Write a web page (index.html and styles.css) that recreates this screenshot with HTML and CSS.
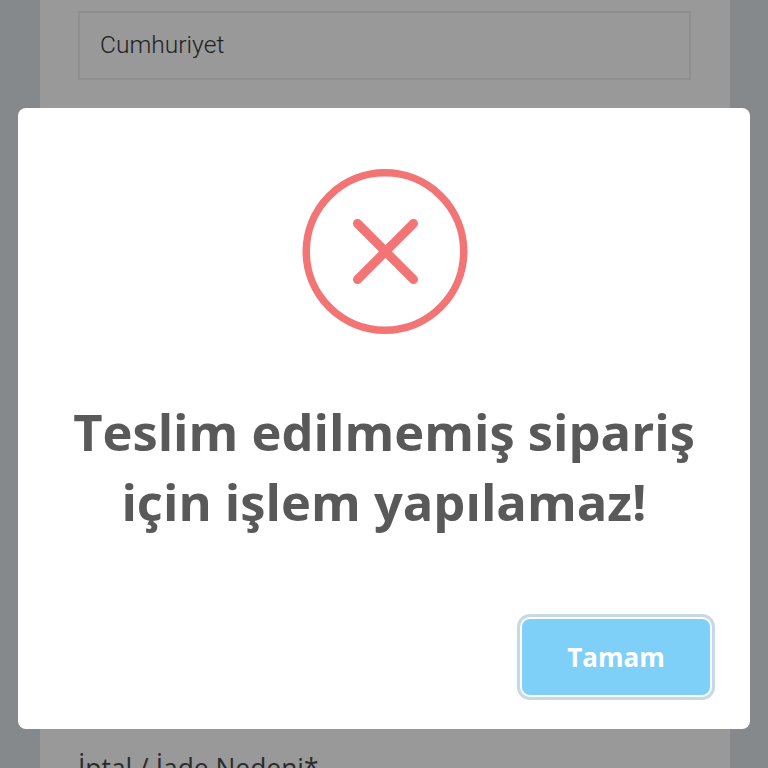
FILE: index.html
```html
<!DOCTYPE html>
<html lang="tr">
<head>
    <meta charset="UTF-8">
    <meta name="viewport" content="width=device-width, initial-scale=1.0">
    <title>Teslim edilmemiş sipariş</title>
    <link rel="stylesheet" href="styles.css">
</head>
<body>
    <div class="page">
        <div class="form-card">
            <div class="input-box">Cumhuriyet</div>
            <p class="field-label">İptal / İade Nedeni*</p>
        </div>
    </div>

    <div class="modal">
        <svg class="error-icon" width="167" height="167" viewBox="0 0 167 167">
            <circle cx="84" cy="83.5" r="78.75" fill="none" stroke="#f27474" stroke-width="7.5"/>
            <path d="M56.5 55.5L112.5 111.5M112.5 55.5L56.5 111.5" fill="none" stroke="#f27474" stroke-width="9" stroke-linecap="round"/>
        </svg>
        <h2 class="modal-title">Teslim edilmemiş sipariş<br>için işlem yapılamaz!</h2>
        <div class="modal-actions">
            <button class="ok-button">Tamam</button>
        </div>
    </div>
</body>
</html>
```

FILE: styles.css
```css
html, body {
    height: 100%;
}

body {
    margin: 0;
    height: 768px;
    overflow: hidden;
    background: #85898c;
    font-family: 'Roboto', sans-serif;
}

.page {
    height: 768px;
    padding: 0 38px 0 40px;
    overflow: hidden;
}

.form-card {
    height: 768px;
    background: #999999;
    padding: 11px 39px 0 38px;
}

.input-box {
    height: 65px;
    line-height: 64px;
    border: 2px solid #8f8f8f;
    padding-left: 20px;
    font-size: 24.6px;
    font-weight: 300;
    color: #1f1f1f;
}

.field-label {
    margin: 676px 0 0 0;
    font-family: 'Open Sans', sans-serif;
    font-size: 26.4px;
    line-height: 24px;
    color: #2b2b2b;
}

.modal {
    position: absolute;
    left: 18px;
    top: 108px;
    width: 732px;
    height: 621px;
    box-sizing: border-box;
    background: white;
    border-radius: 8px;
    padding-top: 60px;
    display: flex;
    flex-direction: column;
    align-items: center;
}

.modal-title {
    margin: 62px 0 0 0;
    font-family: 'Open Sans', sans-serif;
    font-size: 50.7px;
    font-weight: 700;
    line-height: 70px;
    text-align: center;
    color: #595959;
}

.modal-actions {
    align-self: stretch;
    display: flex;
    justify-content: flex-end;
    padding: 80px 38px 0 0;
}

.ok-button {
    width: 192px;
    height: 80px;
    border: 2px solid white;
    border-radius: 10px;
    box-shadow: 0 0 0 3px #c5d9e8;
    background: #7fd0f9;
    color: white;
    font-family: 'Open Sans', sans-serif;
    font-size: 26px;
    font-weight: 700;
}
```
